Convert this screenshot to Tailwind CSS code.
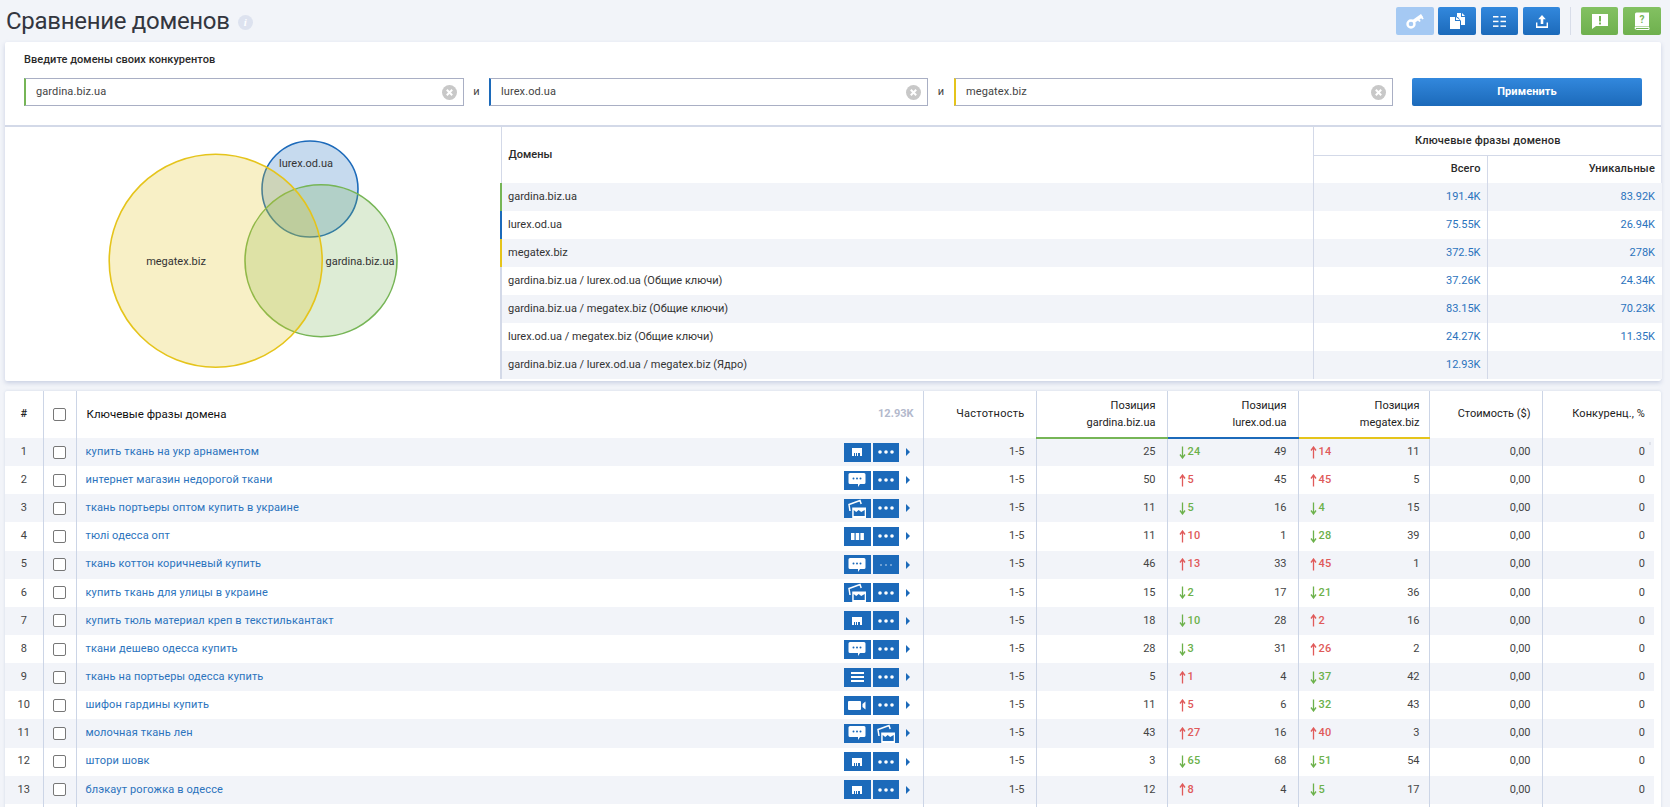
<!DOCTYPE html>
<html lang="ru">
<head>
  <meta charset="UTF-8" />
  <title>Сравнение доменов</title>
  <script src="https://cdn.jsdelivr.net/npm/@tailwindcss/browser@4"></script>
</head>

<body class="relative bg-[#f2f4f9] font-['Roboto',sans-serif] text-[11px] text-[#222] h-[807px] overflow-hidden">

  <!-- Заголовок и кнопки -->
  <div class="h-[42px] flex items-start pl-[6px] pr-[9px]">
    <h1 class="text-[24px] leading-[42px] tracking-[-0.3px] text-[#33363f]">Сравнение доменов</h1>
    <span class="ml-[8px] mt-[15px] w-[15px] h-[15px] rounded-full bg-[#dde2ef] text-white flex items-center justify-center text-[11px] font-bold font-['Liberation_Serif',serif] italic">i</span>

    <div class="ml-auto mt-[7px] flex items-center">
      <button class="w-[38px] h-[28px] rounded-[2px] bg-[#a5c9f3] flex items-center justify-center">
        <svg width="18" height="16" viewBox="0 0 18 16" fill="none"><circle cx="5" cy="11" r="3.500" stroke="#fff" stroke-width="2.400"/><path d="M7.500 8.500L16 2.500" stroke="#fff" stroke-width="3.400"/><path d="M12 6l2 2.500M15 3.500l2 2.500" stroke="#fff" stroke-width="2"/></svg>
      </button>
      <button class="ml-[4px] w-[38px] h-[28px] rounded-[2px] bg-linear-to-b from-[#3288dd] to-[#1c6aba] flex items-center justify-center">
        <svg width="15" height="16" viewBox="0 0 15 16" fill="#fff"><path d="M7 0h4v4h4v8h-4V8L8 4H7z"/><path d="M12 0l3 3h-3z"/><path d="M0 4h5v4h5v8H0z"/><path d="M6 4l4 3H6z"/></svg>
      </button>
      <button class="ml-[5px] w-[37px] h-[28px] rounded-[2px] bg-linear-to-b from-[#3288dd] to-[#1c6aba] flex items-center justify-center">
        <svg width="13" height="11" viewBox="0 0 13 11" fill="#fff"><rect width="5.500" height="1.500"/><rect x="7.500" width="5.500" height="1.500"/><rect y="4.700" width="5.500" height="1.500"/><rect x="7.500" y="4.700" width="5.500" height="1.500"/><rect y="9.400" width="5.500" height="1.500"/><rect x="7.500" y="9.400" width="5.500" height="1.500"/></svg>
      </button>
      <button class="ml-[5px] w-[37px] h-[28px] rounded-[2px] bg-linear-to-b from-[#3288dd] to-[#1c6aba] flex items-center justify-center">
        <svg width="12" height="13" viewBox="0 0 12 13" fill="#fff"><path d="M6 0l3.800 4.300H7.300V9H4.700V4.300H2.200z"/><path d="M0 7.500h1.400v3.800h9.200V7.500H12v5.500H0z"/></svg>
      </button>
      <div class="mx-[10px] w-px h-[28px] bg-[#d8dde9]"></div>
      <button class="w-[37px] h-[28px] rounded-[2px] bg-linear-to-b from-[#83c162] to-[#6fb04e] flex items-center justify-center">
        <svg width="18" height="17" viewBox="0 0 18 17"><path d="M1 1h16v12H5L1 16z" fill="#fff"/><rect x="8" y="3" width="2" height="5.500" fill="#76b556"/><rect x="8" y="9.500" width="2" height="2" fill="#76b556"/></svg>
      </button>
      <button class="ml-[5px] w-[38px] h-[28px] rounded-[2px] bg-linear-to-b from-[#83c162] to-[#6fb04e] flex items-center justify-center">
        <svg width="16" height="19" viewBox="0 0 16 19"><path d="M1 2Q1 .5 2.500 .5H15v14H1z" fill="#fff"/><path d="M1 15.500h14v2H2.500Q1 17.500 1 15.500z" fill="none" stroke="#fff" stroke-width="1"/><text x="8" y="10.500" text-anchor="middle" font-size="10" font-weight="700" font-family="Roboto" fill="#76b556">?</text></svg>
      </button>
    </div>
  </div>

  <!-- Карточка сравнения -->
  <div class="ml-[5px] w-[1656px] h-[339px] bg-white rounded-[2px] shadow-[0_2px_4px_rgba(150,165,200,0.45)]">
    <div class="h-[85px] border-b-2 border-[#d3d9e8] pl-[19px] pr-[19px]">
      <p class="pt-[11px] leading-[13px] font-medium text-[#2a2a2a] tracking-[0.05px]">Введите домены своих конкурентов</p>
      <div class="mt-[12px] flex items-center">
        <div class="w-[440px] h-[28px] border border-[#a9afc4] border-l-2 border-l-[#76b556] flex items-center pl-[10px] pr-[6px] text-[#444] tracking-[0.1px]"><span>gardina.biz.ua</span><span data-x class="ml-auto"></span></div>
        <span class="w-[25px] text-center text-[#444]">и</span>
        <div class="w-[439px] h-[28px] border border-[#a9afc4] border-l-2 border-l-[#1c6aba] flex items-center pl-[10px] pr-[6px] text-[#444] tracking-[0.1px]"><span>lurex.od.ua</span><span data-x class="ml-auto"></span></div>
        <span class="w-[26px] text-center text-[#444]">и</span>
        <div class="w-[439px] h-[28px] border border-[#a9afc4] border-l-2 border-l-[#e5c41b] flex items-center pl-[10px] pr-[6px] text-[#444] tracking-[0.1px]"><span>megatex.biz</span><span data-x class="ml-auto"></span></div>
        <button class="ml-[19px] w-[230px] h-[28px] rounded-[2px] bg-linear-to-b from-[#3288dd] to-[#1c6aba] text-white font-bold text-[11px] tracking-[0.1px]">Применить</button>
      </div>
    </div>

    <div class="flex h-[254px]">
      <!-- Диаграмма -->
      <div class="w-[495px] shrink-0">
        <svg width="495" height="254" viewBox="0 0 495 254" class="block">
          <circle cx="305" cy="62" r="48" fill="#1c6aba" fill-opacity=".25" stroke="#1c6aba" stroke-width="1.600"/>
          <circle cx="316" cy="133.700" r="76" fill="#76b556" fill-opacity=".25" stroke="#76b556" stroke-width="1.600"/>
          <circle cx="210.700" cy="133.700" r="106.500" fill="#e5c41b" fill-opacity=".25" stroke="#e5c41b" stroke-width="1.600"/>
          <text x="301" y="40" text-anchor="middle" font-size="11" font-family="Roboto" fill="#333">lurex.od.ua</text>
          <text x="171" y="138" text-anchor="middle" font-size="11" font-family="Roboto" fill="#333">megatex.biz</text>
          <text x="355" y="138" text-anchor="middle" font-size="11" font-family="Roboto" fill="#333">gardina.biz.ua</text>
        </svg>
      </div>

      <!-- Таблица доменов -->
      <table class="table-fixed border-collapse w-[1161px] h-[252px] self-start">
        <colgroup><col class="w-[812px]"><col class="w-[174px]"><col class="w-[175px]"></colgroup>
        <thead>
          <tr class="h-[28px]">
            <th rowspan="2" class="border-l border-[#d3d9e8] text-left font-medium text-[#2a2a2a] pl-[7px]">Домены</th>
            <th colspan="2" class="border-l border-b border-[#d3d9e8] font-medium text-[#2a2a2a] tracking-[0.2px]">Ключевые фразы доменов</th>
          </tr>
          <tr class="h-[28px]">
            <th class="border-l border-[#d3d9e8] text-right font-medium text-[#2a2a2a] pr-[6px] tracking-[0.1px]">Всего</th>
            <th class="border-l border-[#d3d9e8] text-right font-medium text-[#2a2a2a] pr-[7px] tracking-[0.2px]">Уникальные</th>
          </tr>
        </thead>
        <tbody id="domains"></tbody>
      </table>
    </div>
  </div>

  <!-- Таблица ключевых фраз -->
  <div class="mt-[10px] ml-[5px] w-[1656px] h-[420px] bg-white rounded-[2px] overflow-hidden shadow-[0_0_3px_rgba(150,165,200,0.35)]">
    <table class="table-fixed border-collapse w-[1649px]">
      <colgroup>
        <col class="w-[38px]"><col class="w-[33px]"><col class="w-[847px]"><col class="w-[113px]"><col class="w-[131px]"><col class="w-[131px]"><col class="w-[131px]"><col class="w-[113px]"><col class="w-[112px]">
      </colgroup>
      <thead>
        <tr class="h-[47px]">
          <th class="font-medium">#</th>
          <th class="border-l border-[#ccd5e6]"><span class="block mx-auto w-[13px] h-[13px] border border-[#777] rounded-[2px] bg-white"></span></th>
          <th class="border-l border-[#ccd5e6] text-left pl-[10px] pr-[9px] font-normal">
            <div class="flex justify-between items-center"><span class="text-[11.5px] text-[#111]">Ключевые фразы домена</span><span class="text-[#b3b9cc] font-bold">12.93K</span></div>
          </th>
          <th class="border-l border-[#ccd5e6] text-right pr-[11px] font-normal tracking-[0.25px]">Частотность</th>
          <th class="border-l border-[#ccd5e6] border-b-2 border-b-[#76b556] text-right pr-[11px] font-normal leading-[17px]">Позиция<br>gardina.biz.ua</th>
          <th class="border-l border-[#ccd5e6] border-b-2 border-b-[#1c6aba] text-right pr-[11px] font-normal leading-[17px]">Позиция<br>lurex.od.ua</th>
          <th class="border-l border-[#ccd5e6] border-b-2 border-b-[#e5c41b] text-right pr-[9px] font-normal leading-[17px]">Позиция<br>megatex.biz</th>
          <th class="border-l border-[#ccd5e6] text-right pr-[11px] font-normal">Стоимость ($)</th>
          <th class="border-l border-[#ccd5e6] text-right pr-[9px] font-normal tracking-[0.1px]">Конкуренц., %</th>
        </tr>
      </thead>
      <tbody id="rows"></tbody>
    </table>
  </div>

  <!-- след от полосы прокрутки -->
  <span class="absolute left-[1649px] top-[442px] w-[2px] h-[3px] bg-[#dfe2ea]"></span>

  <script>
    const clearIcon = `<svg width="15" height="15" viewBox="0 0 15 15" class="block"><circle cx="7.500" cy="7.500" r="7.500" fill="#c8c8c8"/><path d="M4.800 4.800l5.400 5.400M10.200 4.800l-5.400 5.400" stroke="#fff" stroke-width="2"/></svg>`;
    document.querySelectorAll('[data-x]').forEach(el => el.innerHTML = clearIcon);

    const domains = [
      ['gardina.biz.ua', '191.4K', '83.92K', 'border-l-[#76b556]'],
      ['lurex.od.ua', '75.55K', '26.94K', 'border-l-[#1c6aba]'],
      ['megatex.biz', '372.5K', '278K', 'border-l-[#e5c41b]'],
      ['gardina.biz.ua / lurex.od.ua (Общие ключи)', '37.26K', '24.34K', 'border-l-[#d3d9e8]'],
      ['gardina.biz.ua / megatex.biz (Общие ключи)', '83.15K', '70.23K', 'border-l-[#d3d9e8]'],
      ['lurex.od.ua / megatex.biz (Общие ключи)', '24.27K', '11.35K', 'border-l-[#d3d9e8]'],
      ['gardina.biz.ua / lurex.od.ua / megatex.biz (Ядро)', '12.93K', '', 'border-l-[#d3d9e8]']
    ];
    document.getElementById('domains').innerHTML = domains.map((d, i) => `
      <tr class="h-[28px] ${i % 2 === 0 ? 'bg-[#f2f4f9]' : 'bg-white'}">
        <td class="border-l-2 ${d[3]} pl-[6px] text-[#333]">${d[0]}</td>
        <td class="border-l border-[#d3d9e8] text-right pr-[6px] text-[#2b73bd]">${d[1]}</td>
        <td class="border-l border-[#d3d9e8] text-right pr-[7px] text-[#2b73bd]">${d[2]}</td>
      </tr>`).join('');

    const icons = {
      store: `<svg width="10" height="8" viewBox="0 0 10 8" fill="#fff"><path d="M0 0h10v5H0z"/><path d="M0 5h2v3H0zM3 5h1v3H3zM5 5h1v3H5zM8 5h2v3H8z"/></svg>`,
      chat: `<svg width="18" height="16" viewBox="0 0 18 16" fill="#fff"><path d="M2 1h14q1.500 0 1.500 1.500v8q0 1.500-1.500 1.500h-4l-2 3v-3H2q-1.500 0-1.500-1.500v-8Q.5 1 2 1z"/><circle cx="5.500" cy="6.500" r="1" fill="#1c6aba"/><circle cx="9" cy="6.500" r="1" fill="#1c6aba"/><circle cx="12.500" cy="6.500" r="1" fill="#1c6aba"/></svg>`,
      image: `<svg width="18" height="19" viewBox="0 0 18 19" class="self-end" fill="none"><path d="M2 12L1 5.500 12 1.500l1.200 3.500" stroke="#fff" stroke-width="1.500"/><path d="M4.200 8.500h14V19h-14z" fill="#fff"/><path d="M5.700 11l2.500 2 2.500-2 2.500 2 3.500-2v6H5.700z" fill="#1c6aba"/></svg>`,
      columns: `<svg width="13" height="7" viewBox="0 0 13 7" fill="#fff"><rect width="3.500" height="7"/><rect x="4.700" width="3.500" height="7"/><rect x="9.400" width="3.500" height="7"/></svg>`,
      list: `<svg width="13" height="10" viewBox="0 0 13 10" fill="#fff"><rect width="13" height="2"/><rect y="4" width="13" height="2"/><rect y="8" width="13" height="2"/></svg>`,
      video: `<svg width="18" height="9" viewBox="0 0 18 9" fill="#fff"><rect width="13" height="9" rx="1"/><path d="M14.500 3L17.500 .5v8L14.500 6z"/></svg>`,
      dots: `<svg width="16" height="4" viewBox="0 0 16 4" fill="#fff"><circle cx="2" cy="2" r="1.800"/><circle cx="8" cy="2" r="1.800"/><circle cx="14" cy="2" r="1.800"/></svg>`,
      dotsSmall: `<svg width="12" height="2" viewBox="0 0 12 2" fill="#fff"><circle cx="1" cy="1" r=".7"/><circle cx="6" cy="1" r=".7"/><circle cx="11" cy="1" r=".7"/></svg>`
    };

    const rows = [
      ['купить ткань на укр арнаментом', 'store', 'dots', 25, '-24', 49, '+14', 11],
      ['интернет магазин недорогой ткани', 'chat', 'dots', 50, '+5', 45, '+45', 5],
      ['ткань портьеры оптом купить в украине', 'image', 'dots', 11, '-5', 16, '-4', 15],
      ['тюлі одесса опт', 'columns', 'dots', 11, '+10', 1, '-28', 39],
      ['ткань коттон коричневый купить', 'chat', 'dotsSmall', 46, '+13', 33, '+45', 1],
      ['купить ткань для улицы в украине', 'image', 'dots', 15, '-2', 17, '-21', 36],
      ['купить тюль материал креп в текстилькантакт', 'store', 'dots', 18, '-10', 28, '+2', 16],
      ['ткани дешево одесса купить', 'chat', 'dots', 28, '-3', 31, '+26', 2],
      ['ткань на портьеры одесса купить', 'list', 'dots', 5, '+1', 4, '-37', 42],
      ['шифон гардины купить', 'video', 'dots', 11, '+5', 6, '-32', 43],
      ['молочная ткань лен', 'chat', 'image', 43, '+27', 16, '+40', 3],
      ['штори шовк', 'store', 'dots', 3, '-65', 68, '-51', 54],
      ['блэкаут рогожка в одессе', 'store', 'dots', 12, '+8', 4, '-5', 17]
    ];

    function delta(v) {
      const up = v[0] === '+';
      const color = up ? 'text-[#e05a5a]' : 'text-[#6cb14b]';
      const arrow = up
        ? '<path d="M3.500 12.500V2M1 4.500L3.500 1 6 4.500" />'
        : '<path d="M3.500 .5V11M1 8.500L3.500 12 6 8.500" />';
      return `<span class="flex items-center gap-[2px] tracking-[0.3px] font-medium ${color}"><svg width="7" height="13" viewBox="0 0 7 13" fill="none" stroke="currentColor" stroke-width="1.300">${arrow}</svg>${v.slice(1)}</span>`;
    }

    let html = rows.map((r, i) => `
      <tr class="h-[28.15px] ${i % 2 === 0 ? 'bg-[#f2f4f9]' : 'bg-white'} text-[#444]">
        <td class="text-center">${i + 1}</td>
        <td class="border-l border-[#ccd5e6]"><span class="block mx-auto w-[13px] h-[13px] border border-[#777] rounded-[2px] bg-white"></span></td>
        <td class="border-l border-[#ccd5e6] pl-[9px] pr-[9px]">
          <div class="flex items-center">
            <a class="text-[#2b73bd] tracking-[0.13px]">${r[0]}</a>
            <span class="ml-auto w-[27px] h-[19px] bg-[#1c6aba] flex items-center justify-center overflow-hidden">${icons[r[1]]}</span>
            <span class="ml-[2px] w-[26px] h-[19px] bg-[#1c6aba] flex items-center justify-center overflow-hidden">${icons[r[2]]}</span>
            <span class="ml-[7px] mr-[4px] w-0 h-0 border-y-[4px] border-y-transparent border-l-[4px] border-l-[#1c6aba]"></span>
          </div>
        </td>
        <td class="border-l border-[#ccd5e6] text-right pr-[11px]">1-5</td>
        <td class="border-l border-[#ccd5e6] text-right pr-[11px]">${r[3]}</td>
        <td class="border-l border-[#ccd5e6] px-[11px]"><div class="flex justify-between items-center">${delta(r[4])}<span>${r[5]}</span></div></td>
        <td class="border-l border-[#ccd5e6] pl-[11px] pr-[9px]"><div class="flex justify-between items-center">${delta(r[6])}<span>${r[7]}</span></div></td>
        <td class="border-l border-[#ccd5e6] text-right pr-[11px]">0,00</td>
        <td class="border-l border-[#ccd5e6] text-right pr-[9px]">0</td>
      </tr>`).join('');

    // пустая строка внизу, чтобы линии колонок шли до края окна
    html += `<tr class="h-[28px]"><td></td>${'<td class="border-l border-[#ccd5e6]"></td>'.repeat(8)}</tr>`;
    document.getElementById('rows').innerHTML = html;
  </script>

</body>
</html>
